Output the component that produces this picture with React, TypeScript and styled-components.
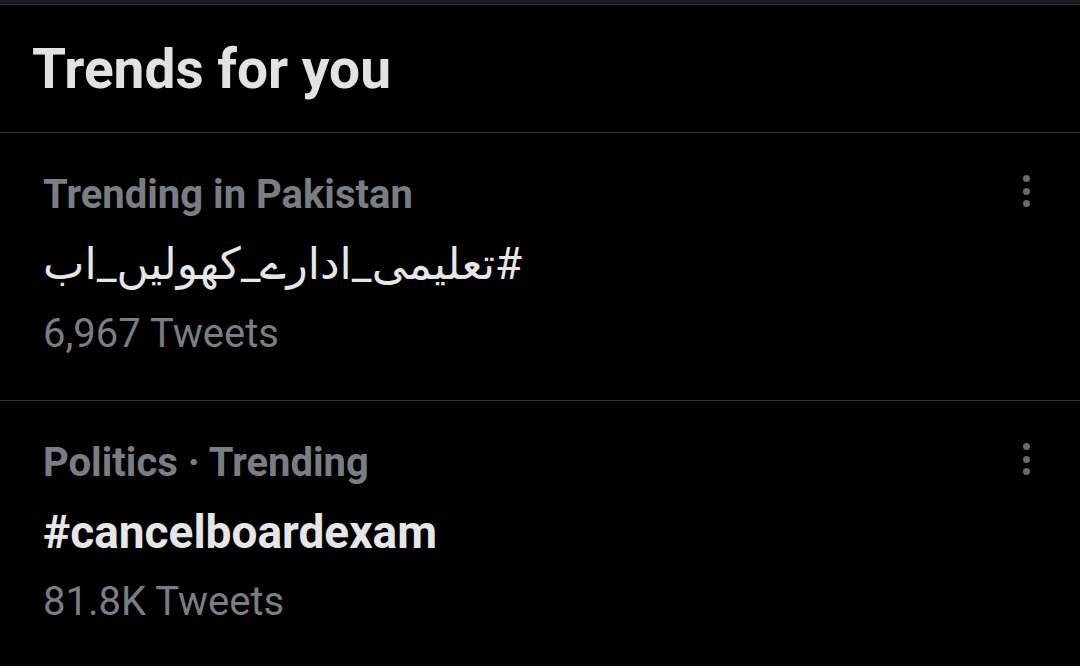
import * as React from "react";
import styled, { createGlobalStyle } from "styled-components";

const GlobalStyle = createGlobalStyle`
  html, body {
    margin: 0;
    padding: 0;
    background: #000;
  }
  body {
    font-family: Roboto, "Liberation Sans", "DejaVu Sans", sans-serif;
    -webkit-font-smoothing: antialiased;
  }
`;

interface Trend {
  id: number;
  context: string;
  name: string;
  count: string;
}

const trends: Array<Trend> = [
  { id: 1, context: "Trending in Pakistan", name: "#تعلیمی_ادارے_کھولیں_اب", count: "6,967 Tweets" },
  { id: 2, context: "Politics · Trending", name: "#cancelboardexam", count: "81.8K Tweets" },
];

const Panel = styled.div`
  width: 1080px;
  height: 666px;
  overflow: hidden;
  background: #000;
  border-top: 4px solid #1a1b22;
`;

const Header = styled.div`
  height: 127px;
  display: flex;
  align-items: center;
  padding-left: 32px;
  border-top: 1px solid #2a2c33;
  border-bottom: 1px solid #2f3336;
`;

const Title = styled.h2`
  margin: 0;
  font-size: 55px;
  font-weight: 700;
  color: #e2e2e2;
  letter-spacing: 0;
`;

const Row = styled.div`
  display: flex;
  justify-content: space-between;
  align-items: flex-start;
  padding: 38px 50px 0 43px;
  height: 229px;
  border-bottom: 1px solid #2f3336;
`;

const Info = styled.div`
  display: flex;
  flex-direction: column;
`;

const Context = styled.div`
  font-size: 40px;
  font-weight: 700;
  line-height: 48px;
  color: #797e84;
`;

const Name = styled.div<{ $rtl?: boolean }>`
  font-size: ${p => (p.$rtl ? "44px" : "46px")};
  font-weight: ${p => (p.$rtl ? 400 : 700)};
  line-height: 91px;
  color: #e6e6e6;
  text-align: left;
  font-family: Roboto, "DejaVu Sans", sans-serif;
`;

const Count = styled.div`
  font-size: 40px;
  font-weight: 400;
  line-height: 48px;
  color: #797e84;
`;

const More = styled.div`
  display: flex;
  flex-direction: column;
  gap: 5.5px;
  padding-top: 4px;
`;

const Dot = styled.span`
  width: 7px;
  height: 7px;
  border-radius: 50%;
  background: #6a6a6a;
`;

export default function App() {
  return (
    <Panel>
      <GlobalStyle />
      <Header>
        <Title>Trends for you</Title>
      </Header>
      {trends.map(trend => {
        const rtl = /[\u0600-\u06ff]/.test(trend.name);
        return (
          <Row key={trend.id}>
            <Info>
              <Context>{trend.context}</Context>
              <Name $rtl={rtl} dir="auto">{trend.name}</Name>
              <Count>{trend.count}</Count>
            </Info>
            <More>
              <Dot />
              <Dot />
              <Dot />
            </More>
          </Row>
        );
      })}
    </Panel>
  );
}
